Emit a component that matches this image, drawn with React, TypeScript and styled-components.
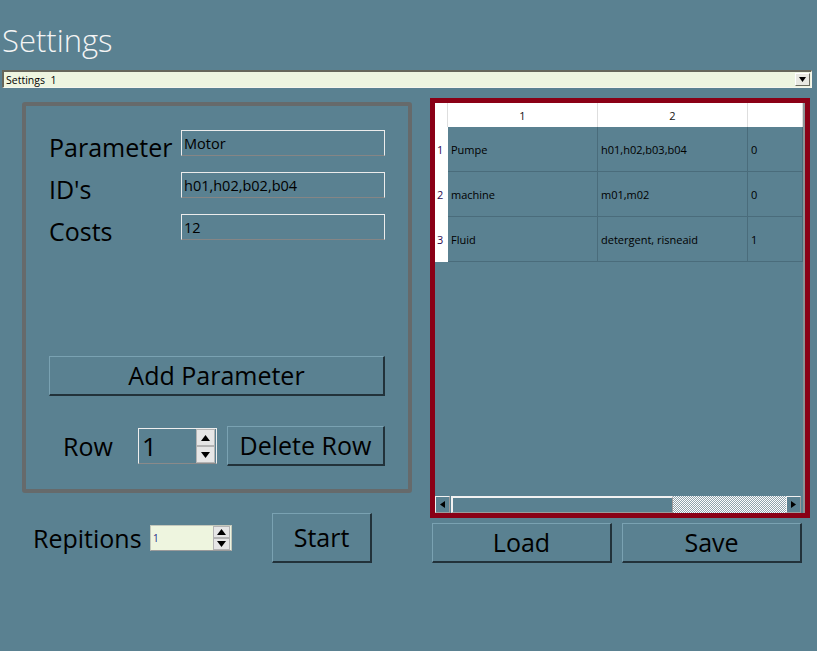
import React from "react";
import styled, { createGlobalStyle } from "styled-components";

const BG = "#5a8191";
const RED = "#8a0016";
const FONT = `"Open Sans", "Noto Sans", sans-serif`;

const Global = createGlobalStyle`
  html, body { margin: 0; padding: 0; background: ${BG}; }
  body { font-family: ${FONT}; }
  #root { width: 817px; height: 651px; background: ${BG}; overflow: hidden; }
`;

const Page = styled.div`
  width: 817px;
  height: 651px;
  box-sizing: border-box;
  padding-top: 19px;
  display: flex;
  flex-direction: column;
  font-family: ${FONT};
`;

const Title = styled.h1`
  margin: 0;
  padding-left: 2px;
  font-weight: 300;
  font-size: 31px;
  line-height: 42px;
  color: #f4f4f4;
`;

const Combo = styled.div`
  margin: 9px 5px 0 2px;
  height: 18px;
  box-sizing: border-box;
  background: #eef5e0;
  border-top: 2px solid #66665a;
  border-left: 2px solid #66665a;
  border-right: 1px solid #f6f6ee;
  border-bottom: 1px solid #f6f6ee;
  display: flex;
  align-items: center;
  justify-content: space-between;
  padding: 0 1px 0 2px;
`;

const ComboText = styled.span`
  font-size: 10.5px;
  color: #000;
  white-space: pre;
  line-height: 14px;
`;

const ComboButton = styled.div`
  width: 15px;
  height: 13px;
  box-sizing: border-box;
  background: #e9e9e2;
  border-top: 1px solid #ffffff;
  border-left: 1px solid #ffffff;
  border-right: 1px solid #6b6b60;
  border-bottom: 1px solid #6b6b60;
  display: flex;
  align-items: center;
  justify-content: center;
`;

const Main = styled.div`
  display: flex;
  align-items: flex-start;
  gap: 18px;
  padding-left: 22px;
  margin-top: 10px;
`;

const LeftCol = styled.div`
  width: 390px;
  margin-top: 4px;
  display: flex;
  flex-direction: column;
  gap: 20px;
`;

const Panel = styled.div`
  width: 390px;
  height: 391px;
  box-sizing: border-box;
  border: 4px solid #666a6b;
  border-radius: 3px;
  padding: 24px 23px 23px;
  display: flex;
  flex-direction: column;
`;

const Fields = styled.div`
  display: grid;
  grid-template-columns: 132px 204px;
  row-gap: 8px;
  align-items: start;
`;

const BigLabel = styled.span`
  font-size: 25px;
  line-height: 34px;
  color: #000;
  white-space: nowrap;
`;

const TextField = styled.input`
  width: 204px;
  height: 26px;
  box-sizing: border-box;
  margin: 0;
  padding: 0 2px;
  background: transparent;
  border: 1px solid #ececec;
  border-bottom: 1px solid #858585;
  font-family: ${FONT};
  font-size: 14.5px;
  color: #000;
  outline: none;
`;

const RaisedButton = styled.button<{ $w: number; $h: number }>`
  width: ${(p) => p.$w}px;
  height: ${(p) => p.$h}px;
  box-sizing: border-box;
  margin: 0;
  padding: 0;
  background: ${BG};
  border-style: solid;
  border-width: 1px 2px 2px 1px;
  border-color: #7aa2b2 #22323a #22323a #7aa2b2;
  font-family: ${FONT};
  font-size: 25px;
  line-height: 1;
  color: #000;
  display: flex;
  align-items: center;
  justify-content: center;
`;

const AddWrap = styled.div`
  margin-top: 108px;
`;

const RowLine = styled.div`
  margin-top: 30px;
  height: 40px;
  display: flex;
  align-items: center;
  padding-left: 14px;
`;

const RowLabel = styled(BigLabel)`
  width: 75px;
`;

const Spin = styled.div<{ $w: number; $h: number; $light?: boolean }>`
  width: ${(p) => p.$w}px;
  height: ${(p) => p.$h}px;
  box-sizing: border-box;
  display: flex;
  align-items: stretch;
  background: ${(p) => (p.$light ? "#eef5df" : "transparent")};
  border: 1px solid ${(p) => (p.$light ? "#c4c8bc" : "#eeeeee")};
  border-bottom-color: ${(p) => (p.$light ? "#9a9a9a" : "#8a8a8a")};
`;

const SpinValue = styled.span<{ $small?: boolean }>`
  flex: 1;
  display: flex;
  align-items: center;
  padding-left: ${(p) => (p.$small ? 2 : 3)}px;
  font-size: ${(p) => (p.$small ? 10 : 26)}px;
  color: ${(p) => (p.$small ? "#1b2a88" : "#000")};
`;

const SpinButtons = styled.div<{ $w: number }>`
  width: ${(p) => p.$w}px;
  display: flex;
  flex-direction: column;
  margin: 0 1px 0 0;
`;

const SpinBtn = styled.div`
  flex: 1;
  box-sizing: border-box;
  background: #e6e6e6;
  border: 1px solid #b4b4b4;
  display: flex;
  align-items: center;
  justify-content: center;
`;

const DeleteWrap = styled.div`
  margin-left: 10px;
`;

const BottomLeft = styled.div`
  height: 50px;
  display: flex;
  align-items: center;
  padding-left: 11px;
`;

const RepLabel = styled(BigLabel)`
  width: 117px;
`;

const StartWrap = styled.div`
  margin-left: 40px;
`;

const RightCol = styled.div`
  width: 380px;
  display: flex;
  flex-direction: column;
  gap: 5px;
`;

const Frame = styled.div`
  width: 380px;
  height: 420px;
  box-sizing: border-box;
  border: 5px solid ${RED};
  display: flex;
  flex-direction: column;
`;

const GridArea = styled.div`
  flex: 1;
  display: flex;
  flex-direction: column;
  border-right: 2px solid #8d9396;
`;

const Grid = styled.div`
  display: grid;
  grid-template-columns: 13px 150px 150px 55px;
  grid-template-rows: 24px repeat(3, 45px);
`;

const Corner = styled.div`
  background: #fff;
  border-right: 1px solid #dedede;
`;

const HeadCell = styled.div`
  background: #fff;
  border-right: 1px solid #dedede;
  display: flex;
  align-items: center;
  justify-content: center;
  font-size: 11px;
  color: #111;
`;

const RowHead = styled.div`
  background: #fff;
  display: flex;
  align-items: center;
  padding-left: 2px;
  font-size: 11px;
  color: #2c0a50;
`;

const Cell = styled.div`
  box-sizing: border-box;
  border-right: 1px solid #4a6c7b;
  border-bottom: 1px solid #4a6c7b;
  display: flex;
  align-items: center;
  padding-left: 3px;
  font-size: 11px;
  color: #000;
  white-space: nowrap;
  overflow: hidden;
`;

const Filler = styled.div`
  flex: 1;
`;

const ScrollBar = styled.div`
  height: 17px;
  display: flex;
  margin-right: 2px;
`;

const ScrollArrow = styled.div`
  width: 15px;
  box-sizing: border-box;
  background: ${BG};
  border-top: 1px solid #f2f2f2;
  border-left: 1px solid #f2f2f2;
  border-right: 1px solid #9b9b9b;
  border-bottom: 1px solid #9b9b9b;
  display: flex;
  align-items: center;
  justify-content: center;
`;

const Thumb = styled.div`
  width: 222px;
  box-sizing: border-box;
  margin-left: 1px;
  background: ${BG};
  border-top: 2px solid #f2f2f2;
  border-left: 2px solid #f2f2f2;
  border-right: 1px solid #9b9b9b;
  border-bottom: 1px solid #9b9b9b;
`;

const Track = styled.div`
  flex: 1;
  background: repeating-conic-gradient(#ffffff 0 25%, #8fa4ad 0 50%) 0 0 / 2px 2px;
`;

const ButtonRow = styled.div`
  display: flex;
  gap: 10px;
  padding-left: 2px;
`;

const Tri = ({ dir, size = 7 }: { dir: "up" | "down" | "left" | "right"; size?: number }) => {
  const h = Math.ceil(size / 2) + 1;
  const pts: Record<string, string> = {
    up: `0,${h} ${size},${h} ${size / 2},0`,
    down: `0,0 ${size},0 ${size / 2},${h}`,
    left: `${h},0 ${h},${size} 0,${size / 2}`,
    right: `0,0 0,${size} ${h},${size / 2}`,
  };
  const vertical = dir === "up" || dir === "down";
  return (
    <svg width={vertical ? size : h} height={vertical ? h : size} viewBox={`0 0 ${vertical ? size : h} ${vertical ? h : size}`}>
      <polygon points={pts[dir]} fill="#000" />
    </svg>
  );
};

const rows = [
  ["1", "Pumpe", "h01,h02,b03,b04", "0"],
  ["2", "machine", "m01,m02", "0"],
  ["3", "Fluid", "detergent, risneaid", "1"],
];

export default function App() {
  return (
    <Page>
      <Global />
      <Title>Settings</Title>
      <Combo>
        <ComboText>Settings  1</ComboText>
        <ComboButton>
          <Tri dir="down" size={7} />
        </ComboButton>
      </Combo>
      <Main>
        <LeftCol>
          <Panel>
            <Fields>
              <BigLabel>Parameter</BigLabel>
              <TextField defaultValue="Motor" />
              <BigLabel>ID's</BigLabel>
              <TextField defaultValue="h01,h02,b02,b04" />
              <BigLabel>Costs</BigLabel>
              <TextField defaultValue="12" />
            </Fields>
            <AddWrap>
              <RaisedButton $w={336} $h={40}>Add Parameter</RaisedButton>
            </AddWrap>
            <RowLine>
              <RowLabel>Row</RowLabel>
              <Spin $w={79} $h={36}>
                <SpinValue>1</SpinValue>
                <SpinButtons $w={19}>
                  <SpinBtn><Tri dir="up" size={9} /></SpinBtn>
                  <SpinBtn><Tri dir="down" size={9} /></SpinBtn>
                </SpinButtons>
              </Spin>
              <DeleteWrap>
                <RaisedButton $w={158} $h={40}>Delete Row</RaisedButton>
              </DeleteWrap>
            </RowLine>
          </Panel>
          <BottomLeft>
            <RepLabel>Repitions</RepLabel>
            <Spin $w={82} $h={26} $light>
              <SpinValue $small>1</SpinValue>
              <SpinButtons $w={17}>
                <SpinBtn><Tri dir="up" size={9} /></SpinBtn>
                <SpinBtn><Tri dir="down" size={9} /></SpinBtn>
              </SpinButtons>
            </Spin>
            <StartWrap>
              <RaisedButton $w={100} $h={50}>Start</RaisedButton>
            </StartWrap>
          </BottomLeft>
        </LeftCol>
        <RightCol>
          <Frame>
            <GridArea>
              <Grid>
                <Corner />
                <HeadCell>1</HeadCell>
                <HeadCell>2</HeadCell>
                <HeadCell />
                {rows.map((r) => (
                  <React.Fragment key={r[0]}>
                    <RowHead>{r[0]}</RowHead>
                    <Cell>{r[1]}</Cell>
                    <Cell>{r[2]}</Cell>
                    <Cell>{r[3]}</Cell>
                  </React.Fragment>
                ))}
              </Grid>
              <Filler />
              <ScrollBar>
                <ScrollArrow><Tri dir="left" size={7} /></ScrollArrow>
                <Thumb />
                <Track />
                <ScrollArrow><Tri dir="right" size={7} /></ScrollArrow>
              </ScrollBar>
            </GridArea>
          </Frame>
          <ButtonRow>
            <RaisedButton $w={180} $h={40}>Load</RaisedButton>
            <RaisedButton $w={180} $h={40}>Save</RaisedButton>
          </ButtonRow>
        </RightCol>
      </Main>
    </Page>
  );
}
